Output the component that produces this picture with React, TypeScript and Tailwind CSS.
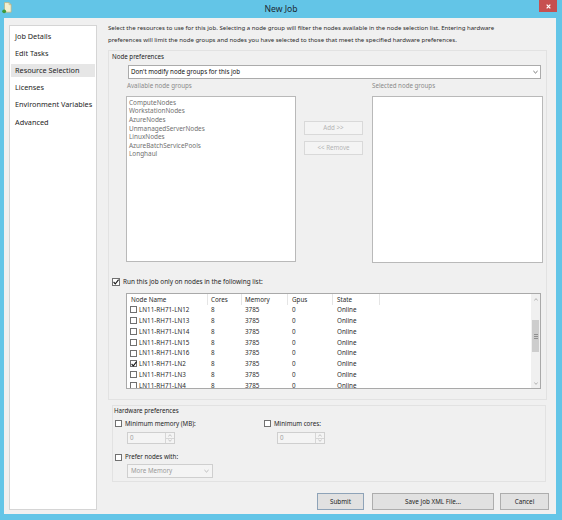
import React from "react";

const Check = ({ checked, size = 7 }: { checked?: boolean; size?: number }) => (
  <span
    className={`${size === 8 ? "w-[8px] h-[8px]" : "w-[7px] h-[7px]"} border border-[#707070] bg-white shrink-0 flex items-center justify-center`}
  >
    {checked && (
      <svg viewBox="0 0 6 6" className="w-[6px] h-[6px] overflow-visible">
        <path d="M0.6 3 L2.3 4.8 L5.6 0.6" stroke="#1a1a1a" strokeWidth="1.1" fill="none" />
      </svg>
    )}
  </span>
);

const Chevron = ({ color = "#333" }: { color?: string }) => (
  <svg viewBox="0 0 6 4" className="w-[5px] h-[4px]">
    <polyline points="0.5,0.8 3,3.2 5.5,0.8" stroke={color} strokeWidth="0.9" fill="none" />
  </svg>
);

const Spinner = () => (
  <div className="w-[48px] h-[12px] border border-[#cfcfcf] bg-[#f4f4f4] flex">
    <div className="flex-1 pl-[2px] text-[6.2px] leading-[10px] text-[#a0a0a0]">0</div>
    <div className="w-[9px] flex flex-col border-l border-[#d6d6d6]">
      <div className="flex-1 flex items-center justify-center border-b border-[#d6d6d6]">
        <svg viewBox="0 0 6 4" className="w-[4px] h-[3px]">
          <polyline points="0.5,3.2 3,0.8 5.5,3.2" stroke="#a8a8a8" strokeWidth="1" fill="none" />
        </svg>
      </div>
      <div className="flex-1 flex items-center justify-center">
        <svg viewBox="0 0 6 4" className="w-[4px] h-[3px]">
          <polyline points="0.5,0.8 3,3.2 5.5,0.8" stroke="#a8a8a8" strokeWidth="1" fill="none" />
        </svg>
      </div>
    </div>
  </div>
);

const nodes = [
  { name: "LN11-RH71-LN12", checked: false },
  { name: "LN11-RH71-LN13", checked: false },
  { name: "LN11-RH71-LN14", checked: false },
  { name: "LN11-RH71-LN15", checked: false },
  { name: "LN11-RH71-LN16", checked: false },
  { name: "LN11-RH71-LN2", checked: true },
  { name: "LN11-RH71-LN3", checked: false },
  { name: "LN11-RH71-LN4", checked: false },
];

const groups = [
  "ComputeNodes",
  "WorkstationNodes",
  "AzureNodes",
  "UnmanagedServerNodes",
  "LinuxNodes",
  "AzureBatchServicePools",
  "Longhaul",
];

const navItems = ["Job Details", "Edit Tasks", "Resource Selection", "Licenses", "Environment Variables", "Advanced"];

export default function App() {
  return (
    <div className="w-[562px] h-[520px] bg-[#63c5e7] flex flex-col overflow-hidden antialiased font-['Noto_Sans','Open_Sans',sans-serif]">
      {/* Title bar */}
      <div className="h-[18px] shrink-0 relative flex items-center justify-center">
        <svg viewBox="0 0 12 14" className="absolute left-[2px] top-[2px] w-[10px] h-[12px]">
          <path d="M3 0.5 H8.5 L11 3 V12 H3 Z" fill="#f4efd0" stroke="#b9ad7a" strokeWidth="0.8" />
          <path d="M8.5 0.5 V3 H11" fill="none" stroke="#b9ad7a" strokeWidth="0.7" />
          <circle cx="2.6" cy="11" r="2.3" fill="#3f9a3a" />
        </svg>
        <span className="text-[8.6px] leading-[10px] text-[#1c2a33]">New Job</span>
        <div className="absolute right-[5px] top-0 w-[18px] h-[12px] bg-[#c75050] flex items-center justify-center">
          <svg viewBox="0 0 6 6" className="w-[5px] h-[5px]">
            <path d="M0.8 0.8 L5.2 5.2 M5.2 0.8 L0.8 5.2" stroke="white" strokeWidth="1.5" />
          </svg>
        </div>
      </div>

      {/* Body */}
      <div className="flex-1 ml-[4px] mr-[6px] mb-[6px] bg-[#f0f0f0] flex">
        {/* Nav */}
        <div className="ml-[5px] mt-[7px] mb-[4px] w-[88px] bg-white border border-[#d5d5d5] pt-[1.5px]">
          {navItems.map((n) => (
            <div key={n} className="h-[17.2px] flex items-center">
              <div
                className={`mx-[1px] flex-1 h-[13.4px] flex items-center pl-[4px] text-[7.3px] text-[#1e1e1e] whitespace-nowrap ${
                  n === "Resource Selection" ? "bg-[#e6e6e6]" : ""
                }`}
              >
                {n}
              </div>
            </div>
          ))}
        </div>

        {/* Right pane */}
        <div className="flex-1 flex flex-col pl-[11px] pr-[7px]">
          <div className="mt-[4px] text-[6.05px] leading-[12px] text-[#2b2b2b] whitespace-nowrap">
            Select the resources to use for this job. Selecting a node group will filter the nodes available in the node selection list. Entering hardware
            <br />
            preferences will limit the node groups and nodes you have selected to those that meet the specified hardware preferences.
          </div>

          {/* Node preferences group */}
          <div className="mt-[4px] w-[439px] border border-[#e2e2e2] pt-[1px] pb-[10px] flex flex-col">
            <div className="ml-[3px] h-[10px] text-[6.2px] leading-[10px] text-[#1e1e1e]">Node preferences</div>
            <div className="ml-[19px] mt-[3px] w-[413px] h-[14px] bg-white border border-[#ababab] flex items-center justify-between pl-[2px] pr-[2px]">
              <span className="text-[6.2px] leading-[10px] text-[#111]">Don't modify node groups for this job</span>
              <Chevron color="#444" />
            </div>
            <div className="mt-[2px] h-[10px] flex text-[6.2px] leading-[10px] text-[#8a8a8a]">
              <span className="ml-[18px] w-[245px]">Available node groups</span>
              <span>Selected node groups</span>
            </div>
            <div className="mt-[5px] ml-[17px] h-[167px] flex">
              <div className="w-[170px] h-[166px] bg-white border border-[#b9b9b9] pt-[1px] pl-[2px]">
                {groups.map((g) => (
                  <div key={g} className="h-[8.67px] flex items-center text-[6.4px] text-[#707070] whitespace-nowrap">
                    {g}
                  </div>
                ))}
              </div>
              <div className="ml-[8px] w-[59px] flex flex-col">
                <div className="mt-[25px] h-[14px] bg-[#f4f4f4] border border-[#d9d9d9] flex items-center justify-center text-[6.2px] text-[#b4b4b4]">
                  Add &gt;&gt;
                </div>
                <div className="mt-[6px] h-[14px] bg-[#f4f4f4] border border-[#d9d9d9] flex items-center justify-center text-[6.2px] text-[#b4b4b4]">
                  &lt;&lt; Remove
                </div>
              </div>
              <div className="ml-[9px] w-[171px] h-[167px] bg-white border border-[#b9b9b9]" />
            </div>
            <div className="mt-[14px] ml-[3px] h-[10px] flex items-center gap-[3px]">
              <Check checked size={8} />
              <span className="text-[6.4px] leading-[10px] text-[#1e1e1e]">Run this job only on nodes in the following list:</span>
            </div>
            {/* Table */}
            <div className="mt-[6px] ml-[17px] w-[415px] h-[96px] border border-[#a9a9a9] bg-white flex overflow-hidden">
              <div className="flex-1 flex flex-col overflow-hidden text-[6.3px] text-[#2b2b2b]">
                <div className="h-[10.5px] shrink-0 flex items-center">
                  <div className="w-[81px] h-full flex items-center pl-[4px] border-r border-[#e5e5e5]">Node Name</div>
                  <div className="w-[34px] h-full flex items-center pl-[3px] border-r border-[#e5e5e5]">Cores</div>
                  <div className="w-[46px] h-full flex items-center pl-[3px] border-r border-[#e5e5e5]">Memory</div>
                  <div className="w-[45px] h-full flex items-center pl-[4px] border-r border-[#e5e5e5]">Gpus</div>
                  <div className="w-[47px] h-full flex items-center pl-[4px] border-r border-[#e5e5e5]">State</div>
                </div>
                {nodes.map((n) => (
                  <div key={n.name} className="h-[10.8px] shrink-0 flex items-center">
                    <div className="w-[81px] flex items-center pl-[3px] gap-[2px] whitespace-nowrap">
                      <Check checked={n.checked} />
                      {n.name}
                    </div>
                    <div className="w-[34px] pl-[3px]">8</div>
                    <div className="w-[46px] pl-[3px]">3785</div>
                    <div className="w-[45px] pl-[4px]">0</div>
                    <div className="w-[47px] pl-[4px]">Online</div>
                  </div>
                ))}
              </div>
              {/* Scrollbar */}
              <div className="w-[9px] h-full bg-[#f0f0f0] flex flex-col">
                <div className="h-[10px] flex items-center justify-center">
                  <svg viewBox="0 0 6 4" className="w-[4px] h-[3px]">
                    <polyline points="0.5,3.2 3,0.8 5.5,3.2" stroke="#8a8a8a" strokeWidth="1" fill="none" />
                  </svg>
                </div>
                <div className="mt-[16px] mx-[1px] h-[32px] bg-[#cdcdcd] flex flex-col items-center justify-center gap-[1px]">
                  <div className="w-[4px] h-[1px] bg-[#8f8f8f]" />
                  <div className="w-[4px] h-[1px] bg-[#8f8f8f]" />
                  <div className="w-[4px] h-[1px] bg-[#8f8f8f]" />
                </div>
                <div className="flex-1" />
                <div className="h-[10px] flex items-center justify-center">
                  <svg viewBox="0 0 6 4" className="w-[4px] h-[3px]">
                    <polyline points="0.5,0.8 3,3.2 5.5,0.8" stroke="#8a8a8a" strokeWidth="1" fill="none" />
                  </svg>
                </div>
              </div>
            </div>
          </div>

          {/* Hardware preferences group */}
          <div className="mt-[5px] ml-[4px] w-[434px] border border-[#e2e2e2] pb-[3px] flex flex-col">
            <div className="ml-[1px] h-[10px] text-[6.2px] leading-[10px] text-[#1e1e1e]">Hardware preferences</div>
            <div className="mt-[3px] h-[10px] flex items-center">
              <div className="w-[151px] flex items-center gap-[3px] pl-[2px]">
                <Check />
                <span className="text-[6.2px] text-[#1e1e1e]">Minimum memory (MB):</span>
              </div>
              <div className="flex items-center gap-[3px]">
                <Check />
                <span className="text-[6.2px] text-[#1e1e1e]">Minimum cores:</span>
              </div>
            </div>
            <div className="mt-[3px] flex">
              <div className="w-[151px] pl-[14px]">
                <Spinner />
              </div>
              <div className="pl-[13px]">
                <Spinner />
              </div>
            </div>
            <div className="mt-[8px] h-[10px] flex items-center gap-[3px] pl-[2px]">
              <Check />
              <span className="text-[6.2px] text-[#1e1e1e]">Prefer nodes with:</span>
            </div>
            <div className="mt-[2px] ml-[14px] w-[86px] h-[14px] bg-[#f4f4f4] border border-[#cfcfcf] flex items-center justify-between pl-[3px] pr-[3px]">
              <span className="text-[6.2px] text-[#9a9a9a]">More Memory</span>
              <Chevron color="#a8a8a8" />
            </div>
          </div>

          {/* Buttons */}
          <div className="mt-[11px] h-[17px] flex justify-end text-[6.3px] text-[#1e1e1e]">
            <div className="w-[47px] h-full bg-[#e1e1e1] border border-[#8ea3b8] flex items-center justify-center">Submit</div>
            <div className="ml-[8px] w-[122px] h-full bg-[#e1e1e1] border border-[#adadad] flex items-center justify-center">
              Save Job XML File...
            </div>
            <div className="ml-[6px] w-[49px] h-full bg-[#e1e1e1] border border-[#adadad] flex items-center justify-center">Cancel</div>
          </div>
        </div>
      </div>
    </div>
  );
}
